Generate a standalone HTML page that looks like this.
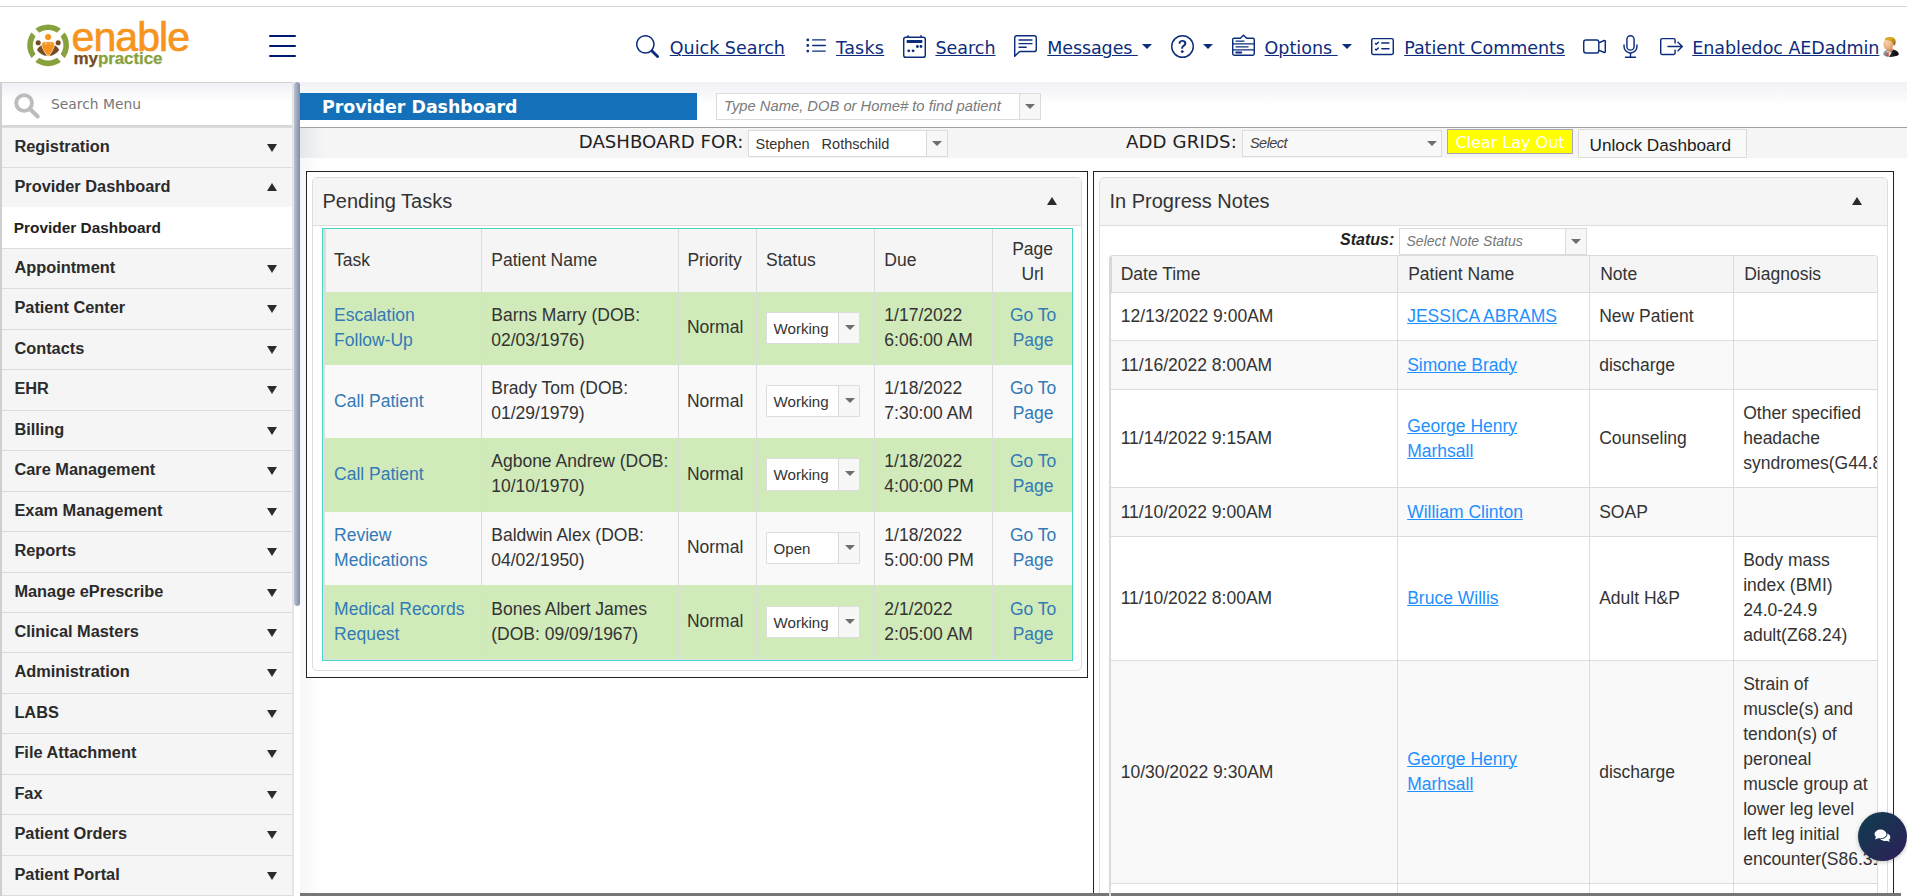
<!DOCTYPE html>
<html lang="en">
<head>
<meta charset="utf-8">
<title>Provider Dashboard</title>
<style>
*{box-sizing:border-box;margin:0;padding:0}
html,body{width:1907px;height:896px;overflow:hidden;background:#fff}
body{position:relative;font-family:"Liberation Sans",Arial,sans-serif;color:#333}
.abs{position:absolute}
a{color:inherit}
/* ---------- top header ---------- */
#topline{position:absolute;left:0;top:6px;width:1907px;height:1px;background:#d6d6d6}
#header{position:absolute;left:0;top:7px;width:1907px;height:75px;background:#fff}
.nav{position:absolute;top:35.300px;height:26px;line-height:26px;font-family:"DejaVu Sans","Liberation Sans",sans-serif;font-size:17.5px;color:#0c2c7c;white-space:pre;text-decoration:underline;text-decoration-thickness:1px;text-underline-offset:1px}
.nicon{position:absolute;color:#0c2c7c}
.caret{position:absolute;width:0;height:0;border-left:5px solid transparent;border-right:5px solid transparent;border-top:5px solid #0c2c7c}
/* ---------- sidebar ---------- */
#side{position:absolute;left:0;top:82px;width:294px;height:814px;background:#f5f5f5;border-left:2px solid #cfcfcf;border-right:2px solid #e4e4e4;overflow:hidden}
#sidesearch{position:absolute;left:0;top:0;width:290px;height:43px;background:linear-gradient(#eff0f5,#fff 45%);border-top:1px solid #d0d0d0;border-bottom:0}
#sidesearch span{position:absolute;left:49px;top:11px;font-family:"DejaVu Sans",sans-serif;font-size:13.850px;color:#777;line-height:20px}
.mi{position:absolute;left:0;width:290px;height:40.45px;border-top:1px solid #dcdcdc;background:#f5f5f5;font-weight:bold;font-size:16.35px;color:#2b2b2b;line-height:36.400px;padding-left:12.400px;white-space:nowrap}
.mi.sub{background:#fff;font-size:15.4px;line-height:41.300px;padding-left:11.800px;color:#222;border-top:0}
.mi i{position:absolute;right:15.500px;top:16px;width:0;height:0;border-left:5.200px solid transparent;border-right:5.200px solid transparent;border-top:8.500px solid #2b2b2b}
.mi i.up{border-top:0;border-bottom:8.500px solid #2b2b2b;top:15px}
#sthumb{position:absolute;left:294px;top:82px;width:6px;height:524px;border-radius:3px;background:linear-gradient(90deg,#bac4d8,#828ba0)}
/* ---------- main ---------- */
#main{position:absolute;left:300px;top:82px;width:1607px;height:814px;background:#fff;overflow:hidden}
#maingrad{position:absolute;left:0;top:0;width:1607px;height:45px;background:linear-gradient(#f0f1f6,#fff 52%)}
#leftshade{position:absolute;left:0;top:76px;width:22px;height:738px;background:linear-gradient(90deg,rgba(196,203,222,.16),rgba(196,203,222,0))}
#tbshade{position:absolute;left:0;top:46px;width:24px;height:30px;background:linear-gradient(90deg,rgba(196,202,216,.34),rgba(196,203,222,0))}
#bluebar{position:absolute;left:0;top:11px;width:396.700px;height:27.300px;background:#1470b8;color:#fff;font-family:"DejaVu Sans",sans-serif;font-weight:bold;font-size:17.4px;line-height:29px;padding-left:22px;white-space:nowrap}
#hline{position:absolute;left:0;top:44.700px;width:1607px;height:1.400px;background:#a2a2a2}
#toolbar{position:absolute;left:0;top:46px;width:1607px;height:30px;background:#f5f5f5}
.combo{position:absolute;background:#fff;border:1px solid #dbdbdb;border-radius:0;font-size:15px;color:#444;white-space:pre;overflow:hidden}
.combo .dd{position:absolute;right:0;top:0;bottom:0;width:21px;border-left:1px solid #dbdbdb;background:#f7f7f7}
.combo .dd:after{content:"";position:absolute;left:5px;top:50%;margin-top:-2.500px;border-left:5.200px solid transparent;border-right:5.200px solid transparent;border-top:5.800px solid #6e6e6e}
.tlabel{position:absolute;font-family:"DejaVu Sans",sans-serif;font-size:18.1px;color:#222;line-height:26px;white-space:nowrap}
/* ---------- panels ---------- */
.outer{position:absolute;border:1.5px solid #222;background:#fff}
.panel{position:absolute;border:1px solid #ddd;border-radius:5px;background:#fff}
.phead{position:absolute;left:0;top:0;right:0;height:48px;background:#f5f5f5;border-bottom:1px solid #ddd;border-radius:4px 4px 0 0;font-size:20px;line-height:47px;color:#333;padding-left:9.5px}
.phead i{position:absolute;right:24.500px;top:19px;width:0;height:0;border-left:5.200px solid transparent;border-right:5.200px solid transparent;border-bottom:8.400px solid #2a2a2a}
table{border-collapse:separate;border-spacing:0;table-layout:fixed;font-size:17.5px;line-height:25px;color:#333}
td,th{font-weight:normal;text-align:left;vertical-align:middle;overflow:hidden}

#lt{position:absolute;left:2.400px;top:0;width:746.600px}
#lt th{height:62.700px;background:#f5f5f5;border-left:1px solid #dcdcdc;padding:0 7.500px 0 8.500px}
#lt th:first-child,#lt td:first-child{border-left:0;padding-left:9.100px}
#lt td{height:73.400px;border-left:1px solid #dcdcdc;padding:0 6px 1.400px 8px;background:#f9f9f9}
#lt tr.g td{background:#d0eab9}
#lt a{color:#337ab7;text-decoration:none}
.scombo{position:relative;display:block;width:94.300px;height:32.300px;background:#fff;border:1px solid #dcdcdc;border-radius:1px;font-size:15.100px;line-height:32px;padding-left:6.500px;color:#333;margin-top:0}
.scombo b{position:absolute;right:0;top:0;bottom:0;width:21px;border-left:1px solid #d9d9d9;background:#f7f7f7}
.scombo b:after{content:"";position:absolute;left:5.800px;top:12px;border-left:5.200px solid transparent;border-right:5.200px solid transparent;border-top:5.800px solid #6e6e6e}

#rt{position:absolute;left:1.600px;top:0;width:901.400px}
#rt th{height:36.900px;background:#f5f5f5;border-left:1px solid #dcdcdc;border-bottom:1px solid #dcdcdc;padding:2px 7px 0 10px}
#rt td{border-left:1px solid #dcdcdc;border-bottom:1px solid #dcdcdc;padding:0 6px 0 9px;background:#fff}
#rt th:first-child,#rt td:first-child{border-left:0;padding-left:9.900px}
#rt tr.a td{background:#f9f9f9}
#rt a{color:#1e90ff;text-decoration:underline;text-decoration-thickness:1px;text-underline-offset:1.200px}
#lt tr:last-child td{padding-top:0;padding-bottom:0}
#lt td:nth-child(2),#lt th:nth-child(2){padding-left:9.200px}
#lt td:nth-child(4),#lt th:nth-child(4){padding-left:8.600px}
#lt td:nth-child(5),#lt th:nth-child(5){padding-left:9.500px}
#lt th:last-child{padding-top:2.400px}
</style>
</head>
<body>
<div id="topline"></div>
<div id="header"></div>
<svg class="abs" style="left:24px;top:22px" width="48" height="48" viewBox="0 0 48 48">
<circle cx="24.100" cy="23.300" r="18.100" fill="none" stroke="#87a13c" stroke-width="5.600"/>
<path d="M8 7.200L40.200 39.400M40.200 7.200L8 39.400" stroke="#fff" stroke-width="5.200"/>
<circle cx="14.200" cy="20.700" r="2.550" fill="#754c24"/>
<circle cx="34.200" cy="20.700" r="2.550" fill="#754c24"/>
<path d="M17.800 23C15.800 24 14 25.800 13 27.900 15.200 31.200 19 33.500 23 34.100Z" fill="#754c24"/>
<path d="M30.400 23C32.400 24 34.200 25.800 35.200 27.900 33 31.200 29.200 33.500 25.200 34.100Z" fill="#754c24"/>
<circle cx="24.100" cy="15.100" r="3.050" fill="#f7941e"/>
<path d="M18 21.300Q18.200 19.900 20 19.800L28.200 19.800Q30 19.900 30.200 21.300L30.300 24.600Q28.300 30 24.100 34.800Q19.900 30 17.900 24.600Z" fill="#f7941e" stroke="#fff" stroke-width=".600"/>
<path d="M21.300 22.600v-1.200q.1-.5.600-.5t.6.500v1.200M26.200 21.200a.7.700 0 1 1 0 1.400" fill="none" stroke="#fff" stroke-width=".450"/>
</svg>
<div class="abs" id="lg1" style="left:71.500px;top:13.500px;font-size:41px;line-height:46px;letter-spacing:-0.900px;color:#f7941e;-webkit-text-stroke:0.700px #f7941e;white-space:nowrap">enable</div>
<div class="abs" id="lg2" style="left:73.600px;top:47.700px;font-size:17px;line-height:22px;font-weight:bold;letter-spacing:-0.100px;-webkit-text-stroke:0.250px;white-space:nowrap"><span style="color:#754c24">my</span><span style="color:#87a13c">practice</span></div>
<div class="abs" style="left:269px;top:35px;width:27px;height:2.4px;background:#001a70;border-radius:1px"></div>
<div class="abs" style="left:269px;top:44.8px;width:27px;height:2.4px;background:#001a70;border-radius:1px"></div>
<div class="abs" style="left:269px;top:54.8px;width:27px;height:2.4px;background:#001a70;border-radius:1px"></div>

<svg class="nicon" style="left:636.3px;top:34.6px" width="23" height="23" viewBox="0 0 16 16" fill="currentColor" ><path d="M11.742 10.344a6.5 6.5 0 1 0-1.397 1.398h-.001c.03.04.062.078.098.115l3.85 3.85a1 1 0 0 0 1.415-1.414l-3.85-3.85a1.007 1.007 0 0 0-.115-.1zM12 6.5a5.5 5.5 0 1 1-11 0 5.5 5.5 0 0 1 11 0z"/></svg>
<a class="nav" id="n1" style="left:669.8px">Quick Search</a>
<svg class="nicon" style="left:804.7px;top:35px" width="22.4" height="22.4" viewBox="0 0 16 16" fill="currentColor" ><path fill-rule="evenodd" d="M5 11.5a.5.5 0 0 1 .5-.5h9a.5.5 0 0 1 0 1h-9a.5.5 0 0 1-.5-.5zm0-4a.5.5 0 0 1 .5-.5h9a.5.5 0 0 1 0 1h-9a.5.5 0 0 1-.5-.5zm0-4a.5.5 0 0 1 .5-.5h9a.5.5 0 0 1 0 1h-9a.5.5 0 0 1-.5-.5zm-3 1a1 1 0 1 0 0-2 1 1 0 0 0 0 2zm0 4a1 1 0 1 0 0-2 1 1 0 0 0 0 2zm0 4a1 1 0 1 0 0-2 1 1 0 0 0 0 2z"/></svg>
<a class="nav" id="n2" style="left:836.1px;letter-spacing:0.25px">Tasks</a>
<svg class="nicon" style="left:902.8px;top:34.8px" width="23" height="23" viewBox="0 0 16 16" fill="currentColor" ><path d="M3.5 0a.5.5 0 0 1 .5.5V1h8V.5a.5.5 0 0 1 1 0V1h1a2 2 0 0 1 2 2v11a2 2 0 0 1-2 2H2a2 2 0 0 1-2-2V3a2 2 0 0 1 2-2h1V.5a.5.5 0 0 1 .5-.5zM2 2a1 1 0 0 0-1 1v11a1 1 0 0 0 1 1h12a1 1 0 0 0 1-1V3a1 1 0 0 0-1-1H2z"/><path d="M2.5 4a.5.5 0 0 1 .5-.5h10a.5.5 0 0 1 .5.5v1a.5.5 0 0 1-.5.5H3a.5.5 0 0 1-.5-.5V4zM9 8a1 1 0 0 1 1-1h.1a1 1 0 0 1 .9 1v.1a1 1 0 0 1-1 .9H10a1 1 0 0 1-1-1V8zm2.5 0a1 1 0 0 1 1-1h0a1 1 0 0 1 1 1v0a1 1 0 0 1-1 1h0a1 1 0 0 1-1-1zM3 11a1 1 0 0 1 1-1h0a1 1 0 0 1 1 1v0a1 1 0 0 1-1 1h0a1 1 0 0 1-1-1zm3 0a1 1 0 0 1 1-1h0a1 1 0 0 1 1 1v0a1 1 0 0 1-1 1h0a1 1 0 0 1-1-1z"/></svg>
<a class="nav" id="n3" style="left:935.4px">Search</a>
<svg class="nicon" style="left:1014.4px;top:34.6px" width="23" height="23" viewBox="0 0 16 16" fill="currentColor" ><path d="M14 1a1 1 0 0 1 1 1v8a1 1 0 0 1-1 1H4.414A2 2 0 0 0 3 11.586l-2 2V2a1 1 0 0 1 1-1h12zM2 0a2 2 0 0 0-2 2v12.793a.5.5 0 0 0 .854.353l2.853-2.853A1 1 0 0 1 4.414 12H14a2 2 0 0 0 2-2V2a2 2 0 0 0-2-2H2z"/><path d="M3 3.5a.5.5 0 0 1 .5-.5h9a.5.5 0 0 1 0 1h-9a.5.5 0 0 1-.5-.5zM3 6a.5.5 0 0 1 .5-.5h9a.5.5 0 0 1 0 1h-9A.5.5 0 0 1 3 6zm0 2.5a.5.5 0 0 1 .5-.5h5a.5.5 0 0 1 0 1h-5a.5.5 0 0 1-.5-.5z"/></svg>
<a class="nav" id="n4" style="left:1047.3px;letter-spacing:-0.1px">Messages </a>
<i class="caret" style="left:1142px;top:44px"></i>
<svg class="nicon" style="left:1170.7px;top:34.8px" width="23" height="23" viewBox="0 0 16 16" fill="currentColor" ><path d="M8 15A7 7 0 1 1 8 1a7 7 0 0 1 0 14zm0 1A8 8 0 1 0 8 0a8 8 0 0 0 0 16z"/><path d="M5.255 5.786a.237.237 0 0 0 .241.247h.825c.138 0 .248-.113.266-.25.09-.656.54-1.134 1.342-1.134.686 0 1.314.343 1.314 1.168 0 .635-.374.927-.965 1.371-.673.489-1.206 1.06-1.168 1.987l.003.217a.25.25 0 0 0 .25.246h.811a.25.25 0 0 0 .25-.25v-.105c0-.718.273-.927 1.01-1.486.609-.463 1.244-.977 1.244-2.056 0-1.511-1.276-2.241-2.673-2.241-1.267 0-2.655.59-2.75 2.286zm1.557 5.763c0 .533.425.927 1.01.927.609 0 1.028-.394 1.028-.927 0-.552-.42-.94-1.029-.94-.584 0-1.009.388-1.009.94z"/></svg>
<i class="caret" style="left:1203.2px;top:44px"></i>
<svg class="nicon" style="left:1232px;top:34.3px" width="23" height="23" viewBox="0 0 16 16" fill="none" stroke="currentColor"><path d="M1.500 2.900h4.300L8 .900l2.200 2h4.300a1 1 0 0 1 1 1v9.900a1 1 0 0 1-1 1h-13a1 1 0 0 1-1-1V3.900a1 1 0 0 1 1-1z" stroke-width="1"/><path d="M.5 6.900h15M.5 11h15" stroke-width=".9"/><path d="M2.800 4.900h5.600M2.800 8.950h8.400" stroke-width=".9" stroke-linecap="round"/><path d="M2.900 12.900h3.600" stroke-width="1.300" stroke-linecap="round"/></svg>
<a class="nav" id="n5" style="left:1264.6px">Options </a>
<i class="caret" style="left:1342px;top:44px"></i>
<svg class="nicon" style="left:1371px;top:34.8px" width="23" height="23" viewBox="0 0 16 16" fill="currentColor" ><path d="M14.5 3a.5.5 0 0 1 .5.5v9a.5.5 0 0 1-.5.5h-13a.5.5 0 0 1-.5-.5v-9a.5.5 0 0 1 .5-.5h13zm-13-1A1.5 1.5 0 0 0 0 3.500v9A1.5 1.5 0 0 0 1.500 14h13a1.500 1.500 0 0 0 1.500-1.500v-9A1.500 1.500 0 0 0 14.500 2h-13z"/><path d="M7 5.500a.5.5 0 0 1 .5-.5h5a.5.5 0 0 1 0 1h-5a.5.5 0 0 1-.5-.5zm-1.496-.854a.5.5 0 0 1 0 .708l-1.500 1.500a.5.5 0 0 1-.708 0l-.5-.5a.5.5 0 1 1 .708-.708l.146.147 1.146-1.147a.5.5 0 0 1 .708 0zM7 9.500a.5.5 0 0 1 .5-.5h5a.5.5 0 0 1 0 1h-5a.5.5 0 0 1-.5-.5zm-1.496-.854a.5.5 0 0 1 0 .708l-1.500 1.500a.5.5 0 0 1-.708 0l-.5-.5a.5.5 0 0 1 .708-.708l.146.147 1.146-1.147a.5.5 0 0 1 .708 0z"/></svg>
<a class="nav" id="n6" style="left:1404.2px;letter-spacing:-0.04px">Patient Comments</a>
<svg class="nicon" style="left:1583.4px;top:34.8px" width="23" height="23" viewBox="0 0 16 16" fill="currentColor" ><path fill-rule="evenodd" d="M0 5a2 2 0 0 1 2-2h7.500a2 2 0 0 1 1.983 1.738l3.110-1.382A1 1 0 0 1 16 4.269v7.462a1 1 0 0 1-1.406.913l-3.111-1.382A2 2 0 0 1 9.500 13H2a2 2 0 0 1-2-2V5zm11.500 5.175 3.500 1.556V4.269l-3.500 1.556v4.350zM2 4a1 1 0 0 0-1 1v6a1 1 0 0 0 1 1h7.500a1 1 0 0 0 1-1V5a1 1 0 0 0-1-1H2z"/></svg>
<svg class="nicon" style="left:1618.9px;top:34.8px" width="23" height="23" viewBox="0 0 16 16" fill="currentColor" ><path d="M3.500 6.500A.5.5 0 0 1 4 7v1a4 4 0 0 0 8 0V7a.5.5 0 0 1 1 0v1a5 5 0 0 1-4.500 4.975V15h3a.5.5 0 0 1 0 1h-7a.5.5 0 0 1 0-1h3v-2.025A5 5 0 0 1 3 8V7a.5.5 0 0 1 .500-.500z"/><path d="M10 8a2 2 0 1 1-4 0V3a2 2 0 1 1 4 0v5zM8 0a3 3 0 0 0-3 3v5a3 3 0 0 0 6 0V3a3 3 0 0 0-3-3z"/></svg>
<svg class="nicon" style="left:1660px;top:34.8px" width="23" height="23" viewBox="0 0 16 16" fill="currentColor" ><path fill-rule="evenodd" d="M10 12.500a.5.5 0 0 1-.5.5h-8a.5.5 0 0 1-.5-.5v-9a.5.5 0 0 1 .5-.5h8a.5.5 0 0 1 .5.5v2a.5.5 0 0 0 1 0v-2A1.500 1.500 0 0 0 9.500 2h-8A1.500 1.500 0 0 0 0 3.500v9A1.500 1.500 0 0 0 1.500 14h8a1.500 1.500 0 0 0 1.500-1.500v-2a.5.5 0 0 0-1 0v2z"/><path fill-rule="evenodd" d="M15.854 8.354a.5.5 0 0 0 0-.708l-3-3a.5.5 0 0 0-.708.708L14.293 7.500H5.500a.5.5 0 0 0 0 1h8.793l-2.147 2.146a.5.5 0 0 0 .708.708l3-3z"/></svg>
<a class="nav" id="n7" style="left:1692.3px;letter-spacing:-0.05px">Enabledoc AEDadmin</a>
<svg class="abs" style="left:1881px;top:36px" width="20" height="22" viewBox="0 0 20 22">
<defs><linearGradient id="suit" x1="0" x2="1"><stop offset="0" stop-color="#b4b8bd"/><stop offset=".22" stop-color="#70757a"/><stop offset=".45" stop-color="#26272a"/><stop offset="1" stop-color="#050505"/></linearGradient>
<radialGradient id="skin" cx=".35" cy=".3" r=".8"><stop offset="0" stop-color="#f9d3a8"/><stop offset=".6" stop-color="#eab585"/><stop offset="1" stop-color="#cf8f5c"/></radialGradient>
<linearGradient id="hair" x1="0" y1="0" x2=".6" y2="1"><stop offset="0" stop-color="#c9901c"/><stop offset=".35" stop-color="#dcae1e"/><stop offset="1" stop-color="#9c5f2a"/></linearGradient></defs>
<path d="M2 18.400C2.200 16 4 14.700 6.500 14.100L8 13.700l4-.200c3.500.600 5.600 2.400 5.900 5.100-1.900 2-6.900 2.400-9.400 2.300-3-.100-5.500-.900-6.500-2.500z" fill="url(#suit)"/>
<path d="M5.300 15.100l3.300-1.200 2.100 2.600-2.500 4.200-2-.300z" fill="#d3e2f5"/>
<path d="M5.900 16.500l1.600-.400.400 3.600-1.300.900-1-1.100z" fill="#d9512c"/>
<path d="M6.600 12l4.700-.500.600 3.300-2.600 1.700-2.400-1.500z" fill="#d0905e"/>
<ellipse cx="7.300" cy="8.300" rx="4.900" ry="6" fill="url(#skin)"/>
<path d="M3.700 3.300C4.800 1.300 8.300.500 11.400 1.300c2.600.700 3.700 3 3.200 5.600-.200 1.400-.900 2.600-1.800 3.100-.100-1.900-1.200-4.300-2.900-5.300-2 .100-4.600-.300-6.200-1.400z" fill="url(#hair)"/>
</svg>

<div id="side">
<div id="sidesearch"><svg class="abs" style="left:0;top:0" width="44" height="42" viewBox="0 0 44 42"><circle cx="22.100" cy="20.050" r="7.900" fill="none" stroke="#bcbcbc" stroke-width="3.800"/><path d="M28 26l7.600 7.500" stroke="#bcbcbc" stroke-width="4.200" stroke-linecap="round"/></svg><span>Search Menu</span></div>
<div class="abs" style="left:0;top:43px;width:290px;height:2.500px;background:#d8d8d8"></div>
<div class="mi" style="top:44.55px">Registration<i class=""></i></div>
<div class="mi" style="top:85.00px">Provider Dashboard<i class="up"></i></div>
<div class="mi sub" style="top:125.45px">Provider Dashboard</div>
<div class="mi" style="top:165.90px">Appointment<i class=""></i></div>
<div class="mi" style="top:206.35px">Patient Center<i class=""></i></div>
<div class="mi" style="top:246.80px">Contacts<i class=""></i></div>
<div class="mi" style="top:287.25px">EHR<i class=""></i></div>
<div class="mi" style="top:327.70px">Billing<i class=""></i></div>
<div class="mi" style="top:368.15px">Care Management<i class=""></i></div>
<div class="mi" style="top:408.60px">Exam Management<i class=""></i></div>
<div class="mi" style="top:449.05px">Reports<i class=""></i></div>
<div class="mi" style="top:489.50px">Manage ePrescribe<i class=""></i></div>
<div class="mi" style="top:529.95px">Clinical Masters<i class=""></i></div>
<div class="mi" style="top:570.40px">Administration<i class=""></i></div>
<div class="mi" style="top:610.85px">LABS<i class=""></i></div>
<div class="mi" style="top:651.30px">File Attachment<i class=""></i></div>
<div class="mi" style="top:691.75px">Fax<i class=""></i></div>
<div class="mi" style="top:732.20px">Patient Orders<i class=""></i></div>
<div class="mi" style="top:772.65px">Patient Portal<i class=""></i></div>
<div class="mi" style="top:813.10px">Settings<i class=""></i></div>
</div>
<div id="sthumb"></div>

<div id="main">
<div id="maingrad"></div>
<div id="bluebar">Provider Dashboard</div>
<div id="hline"></div>
<div id="toolbar"></div>
<div id="leftshade"></div><div id="tbshade"></div>
<div class="combo" style="left:416px;top:11px;width:325px;height:26.500px;font-style:italic;color:#7a7a7a;line-height:24.500px;padding-left:7px;font-size:14.760px" id="psearch">Type Name, DOB or Home# to find patient<span class="dd"></span></div>
<div class="tlabel" id="lblA" style="left:278.800px;top:46.700px">DASHBOARD FOR:</div>
<div class="combo" style="left:448px;top:48px;width:199.500px;height:26.500px;line-height:26.500px;padding-left:6.500px;font-size:14.500px;color:#333" id="prov">Stephen   Rothschild<span class="dd"></span></div>
<div class="tlabel" id="lblB" style="left:826px;top:46.700px;letter-spacing:0.150px">ADD GRIDS:</div>
<div class="combo" style="left:942px;top:48px;width:199.500px;height:26.500px;line-height:25.500px;padding-left:7px;font-size:14.500px;font-style:italic;letter-spacing:-0.550px;color:#444;background:#f8f8f8" id="addg">Select<span class="dd" style="border-left:0;background:transparent;right:-2px"></span></div>
<div class="abs" id="clr" style="left:1147px;top:47px;width:126px;height:24.500px;background:#ffff00;border:1px solid #a9a9b6;color:#fff;font-family:'DejaVu Sans',sans-serif;font-size:16px;line-height:25.600px;text-align:center;white-space:nowrap">Clear Lay Out</div>
<div class="abs" id="unl" style="left:1278px;top:47px;width:169px;height:28.600px;background:#f9f9f9;border:1px solid #dadada;border-radius:1px;color:#1c1c1c;font-size:17.200px;line-height:30.500px;padding-right:4.500px;text-align:center;white-space:nowrap">Unlock Dashboard</div>

<div class="outer" style="left:6px;top:89px;width:781.600px;height:507px"></div>
<div class="panel" id="lp" style="left:12px;top:95px;width:770px;height:494px">
<div class="phead">Pending Tasks<i></i></div>
<div class="abs" id="lgrid" style="left:8.600px;top:50px;width:751.200px;height:433.300px;border:1px solid #45d6c6;background:#e2e2e2">
<div class="abs" style="left:0;top:0;width:2.400px;height:430px;background:#e0dcdc"></div><div class="abs" style="left:0;top:0;width:3.400px;height:62.500px;background:#dcdcdc;z-index:2"></div>
<table id="lt"><colgroup><col style="width:156.100px"><col style="width:196.800px"><col style="width:78.600px"><col style="width:117.400px"><col style="width:117.700px"><col style="width:80px"></colgroup>
<tr><th>Task</th><th>Patient Name</th><th>Priority</th><th>Status</th><th>Due</th><th style="text-align:center">Page<br>Url</th></tr>
<tr class="g"><td><a>Escalation<br>Follow-Up</a></td><td>Barns Marry (DOB:<br>02/03/1976)</td><td>Normal</td><td><span class="scombo">Working<b></b></span></td><td>1/17/2022<br>6:06:00 AM</td><td style="text-align:center"><a>Go To<br>Page</a></td></tr>
<tr class=""><td><a>Call Patient</a></td><td>Brady Tom (DOB:<br>01/29/1979)</td><td>Normal</td><td><span class="scombo">Working<b></b></span></td><td>1/18/2022<br>7:30:00 AM</td><td style="text-align:center"><a>Go To<br>Page</a></td></tr>
<tr class="g"><td><a>Call Patient</a></td><td>Agbone Andrew (DOB:<br>10/10/1970)</td><td>Normal</td><td><span class="scombo">Working<b></b></span></td><td>1/18/2022<br>4:00:00 PM</td><td style="text-align:center"><a>Go To<br>Page</a></td></tr>
<tr class=""><td><a>Review<br>Medications</a></td><td>Baldwin Alex (DOB:<br>04/02/1950)</td><td>Normal</td><td><span class="scombo">Open<b></b></span></td><td>1/18/2022<br>5:00:00 PM</td><td style="text-align:center"><a>Go To<br>Page</a></td></tr>
<tr class="g"><td><a>Medical Records<br>Request</a></td><td>Bones Albert James<br>(DOB: 09/09/1967)</td><td>Normal</td><td><span class="scombo">Working<b></b></span></td><td>2/1/2022<br>2:05:00 AM</td><td style="text-align:center"><a>Go To<br>Page</a></td></tr>
</table>
</div>
</div>

<div class="outer" style="left:793px;top:89px;width:800.800px;height:900px"></div>
<div class="panel" id="rp" style="left:799px;top:95px;width:789px;height:900px">
<div class="phead">In Progress Notes<i style="right:25.500px"></i></div>
<div class="abs" id="stl" style="left:240px;top:52px;font-size:16px;font-weight:bold;font-style:italic;color:#222;line-height:20px;white-space:nowrap">Status:</div>
<div class="combo" id="stc" style="left:299px;top:50px;width:188px;height:26.500px;line-height:24.500px;padding-left:6.500px;font-size:14.050px;font-style:italic;color:#777">Select Note Status<span class="dd"></span></div>
<div class="abs" id="rgrid" style="left:9.200px;top:77px;width:769px;height:800px;overflow:hidden;border-radius:4px 4px 0 0;border-top:1px solid #dcdcdc;border-right:1px solid #dcdcdc;background:#fff">
<div class="abs" style="left:0;top:0;width:1.600px;height:800px;background:#dadada;z-index:2"></div><div class="abs" style="left:0;top:0;width:3px;height:37px;background:#d8d8d8;z-index:2"></div>
<table id="rt"><colgroup><col style="width:286.400px"><col style="width:192px"><col style="width:144px"><col style="width:279px"></colgroup>
<tr><th>Date Time</th><th>Patient Name</th><th>Note</th><th>Diagnosis</th></tr>
<tr class=""><td style="height:48.6px">12/13/2022 9:00AM</td><td><a>JESSICA ABRAMS</a></td><td>New Patient</td><td></td></tr>
<tr class="a"><td style="height:48.9px">11/16/2022 8:00AM</td><td><a>Simone Brady</a></td><td>discharge</td><td></td></tr>
<tr class=""><td style="height:98.0px">11/14/2022 9:15AM</td><td><a>George Henry<br>Marhsall</a></td><td>Counseling</td><td>Other specified<br>headache<br>syndromes(G44.89)</td></tr>
<tr class="a"><td style="height:48.9px">11/10/2022 9:00AM</td><td><a>William Clinton</a></td><td>SOAP</td><td></td></tr>
<tr class=""><td style="height:123.3px">11/10/2022 8:00AM</td><td><a>Bruce Willis</a></td><td>Adult H&amp;P</td><td>Body mass<br>index (BMI)<br>24.0-24.9<br>adult(Z68.24)</td></tr>
<tr class="a"><td style="height:223.9px">10/30/2022 9:30AM</td><td><a>George Henry<br>Marhsall</a></td><td>discharge</td><td>Strain of<br>muscle(s) and<br>tendon(s) of<br>peroneal<br>muscle group at<br>lower leg level<br>left leg initial<br>encounter(S86.311A)</td></tr>
<tr class=""><td style="height:60px">10/28/2022 10:00AM</td><td></td><td></td><td></td></tr>
</table>
</div>
</div>

</div>
<div class="abs" style="left:300px;top:892.600px;width:1600.500px;height:4px;background:#767676"></div>
<div class="abs" style="left:1857.500px;top:811.500px;width:49.500px;height:49.500px;border-radius:50%;background:linear-gradient(135deg,#13394f 15%,#2b2258 90%);box-shadow:0 1px 4px rgba(0,0,0,.25)"></div>
<svg class="abs" style="left:1874px;top:829px" width="17" height="14" viewBox="0 0 17 14"><ellipse cx="6.500" cy="5" rx="6" ry="4.400" fill="#fff"/><path d="M2 7.500L1 10.500 5 9z" fill="#fff"/><path d="M13.400 4.600c1.700.800 2.900 2.100 2.900 3.600 0 1-.5 1.900-1.400 2.600l.8 2.200-2.800-1.300c-.7.200-1.400.3-2.100.3-2 0-3.700-.8-4.600-1.900 4 .1 7.500-2 7.200-5.500z" fill="#fff"/></svg>

</body>
</html>
